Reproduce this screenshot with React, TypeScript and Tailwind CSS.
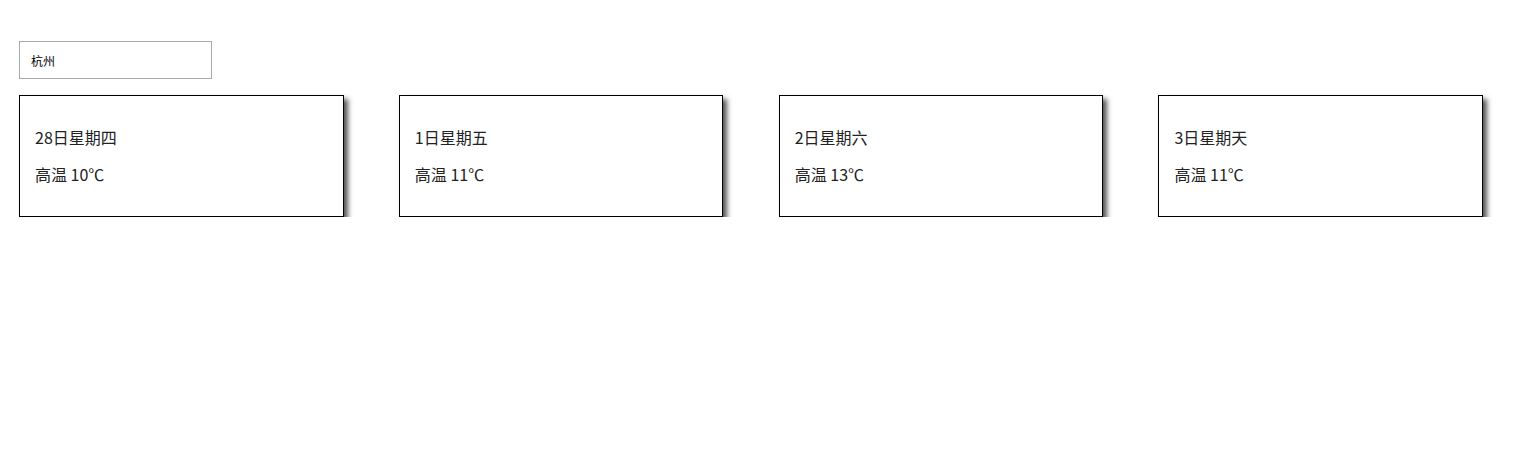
import { useState } from "react";

const days = [
    { date: "28日星期四", high: "10℃" },
    { date: "1日星期五", high: "11℃" },
    { date: "2日星期六", high: "13℃" },
    { date: "3日星期天", high: "11℃" },
];

export default function App() {
    const [city, setCity] = useState("杭州");

    return (
        <div
            className="px-[19px] pt-[41px] text-black"
            style={{ fontFamily: '"Microsoft YaHei", "Noto Sans CJK SC", "Noto Sans", sans-serif' }}
        >
            <input
                type="text"
                value={city}
                onChange={e => setCity(e.target.value)}
                className="block w-[193px] h-[38px] border border-[#a9a9a9] px-[11px] text-[12px] text-black focus:outline-none"
            />
            <div className="mt-[16px] w-[1464px] grid grid-cols-4 gap-x-[55.33px]">
                {days.map(day => (
                    <div
                        key={day.date}
                        className="h-[122px] border border-black bg-white px-[15px] py-[31px] shadow-[4px_4px_5px_#555] flex flex-col gap-[16px]"
                    >
                        <p className="text-[16px] leading-[21px] text-[#222]">{day.date}</p>
                        <p className="text-[16px] leading-[21px] text-[#222]">高温 {day.high}</p>
                    </div>
                ))}
            </div>
        </div>
    );
}
